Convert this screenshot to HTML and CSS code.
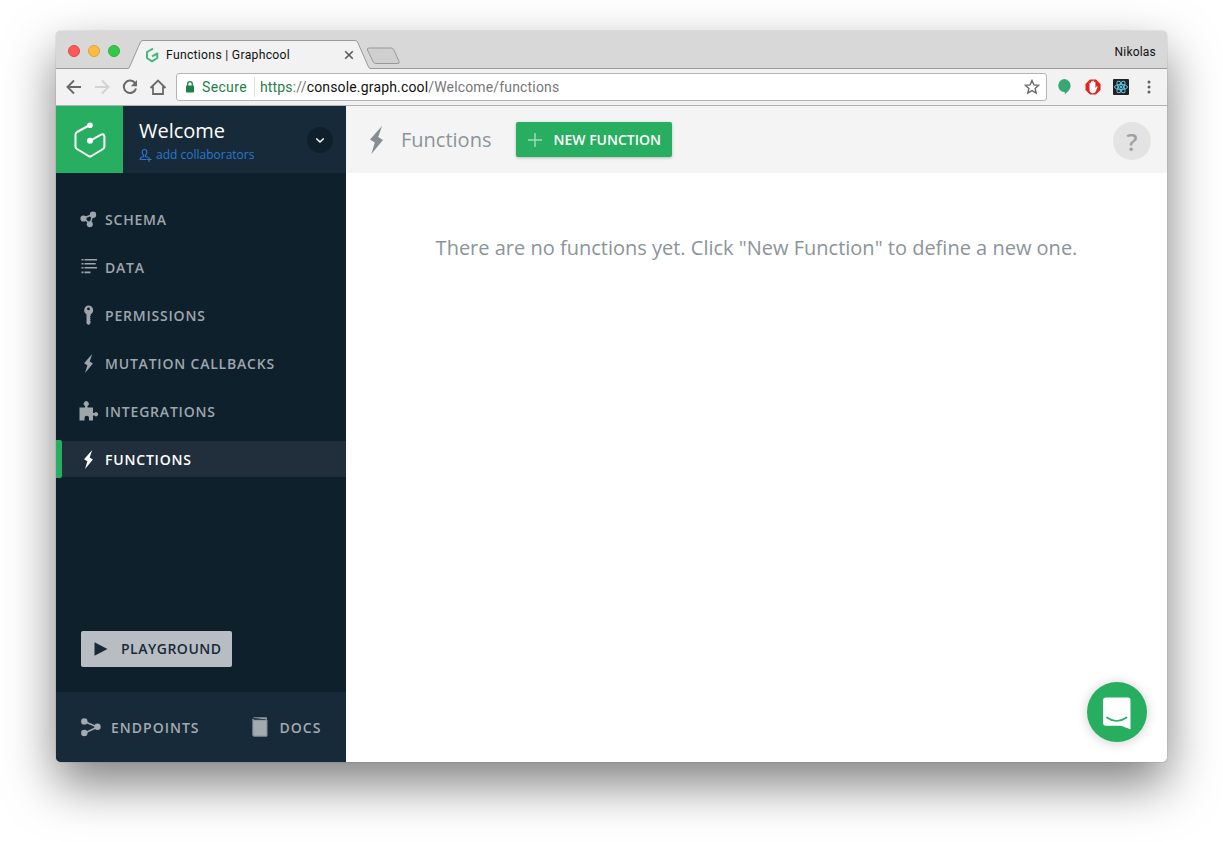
FILE: index.html
```html
<!DOCTYPE html>
<html lang="en">
<head>
<meta charset="utf-8">
<title>Functions | Graphcool</title>
<link rel="stylesheet" href="styles.css">
</head>
<body>
<svg class="defs" width="0" height="0">
  <symbol id="bolt" viewBox="0 0 13 28"><path d="M12 0L0 13.500l4.800 3L1.400 28 13 14l-4.800-3z"/></symbol>
</svg>
<div class="window">
  <header class="titlebar">
    <div class="lights"><i class="red"></i><i class="yellow"></i><i class="green"></i></div>
    <div class="tab">
      <svg class="tab-shape" width="244" height="30" viewBox="0 0 244 30"><path d="M0 28.500L1.500 27L12 3Q13 .5 15 .5H227Q229 .5 230 3L240.500 27L242 28.500V30H0z" fill="#f2f2f2"/><path d="M0 28.500Q1 28.500 1.500 27L12 3Q13 .5 15 .5H227Q229 .5 230 3L240.500 27Q241 28.500 243 28.500" fill="none" stroke="#999"/></svg>
      <svg class="favicon" width="14" height="16" viewBox="0 0 14 16" fill="none" stroke="#45b97c" stroke-width="2" stroke-linejoin="round"><path d="M8 1.600L2 5v6l5 3.300 5.300-3.300V6.500L7 9.300"/></svg>
      <span class="tab-title">Functions | Graphcool</span>
      <svg class="close" width="10" height="10" viewBox="0 0 10 10" stroke="#5a5a5a" stroke-width="1.600"><path d="M1.200 1.200l7.600 7.600M8.800 1.200L1.200 8.800"/></svg>
    </div>
    <svg class="newtab" width="35" height="18" viewBox="0 0 35 18"><path d="M3 1H25Q27 1 28 3L33 14.500Q34 16.500 31.500 16.500H10Q8 16.500 7 14.500L1.500 3Q.8 1 3 1z" fill="#cfcfcf" stroke="#999"/></svg>
    <span class="user">Nikolas</span>
  </header>
  <div class="toolbar">
    <svg class="back" width="16" height="16" viewBox="0 0 16 16" fill="none" stroke="#6a6a6a" stroke-width="1.900"><path d="M15 8H2M8 1.500L1.500 8 8 14.500"/></svg>
    <svg class="forward" width="16" height="16" viewBox="0 0 16 16" fill="none" stroke="#d2d2d2" stroke-width="1.900"><path d="M1 8h13M8 1.500L14.500 8 8 14.500"/></svg>
    <svg class="reload" width="16" height="16" viewBox="0 0 16 16"><path d="M13.300 4.500A6.200 6.200 0 1 0 14 9.500" fill="none" stroke="#6a6a6a" stroke-width="2"/><path d="M15 1v6.200H8.800z" fill="#6a6a6a"/></svg>
    <svg class="home" width="18" height="16" viewBox="0 0 18 16" fill="none" stroke="#6a6a6a" stroke-width="1.800"><path d="M1.500 9L9 1.500 16.500 9M4 7.500V15h10V7.500"/></svg>
    <div class="address">
      <svg width="10" height="12" viewBox="0 0 10 12"><rect x="1" y="4.500" width="8" height="7" rx=".8" fill="#1f8046"/><path d="M2.700 5V3a2.300 2.300 0 0 1 4.600 0v2" fill="none" stroke="#1f8046" stroke-width="1.300"/></svg>
      <span class="secure">Secure</span>
      <span class="url"><span class="scheme">https</span><span class="dim">://</span>console.graph.cool<span class="dim">/Welcome/functions</span></span>
      <svg class="star" width="16" height="16" viewBox="0 0 16 16" fill="none" stroke="#6a6a6a" stroke-width="1.400"><path d="M8 1.500l1.900 4.400 4.800.4-3.600 3.100 1.100 4.700L8 11.600l-4.200 2.500 1.100-4.700L1.300 6.300l4.800-.4z"/></svg>
    </div>
    <svg class="ext1" width="14" height="16" viewBox="0 0 14 16"><path d="M7 0a6.600 6.600 0 0 1 6.600 6.600c0 4-3 6.500-5.800 9v-2.500H7A6.600 6.600 0 0 1 7 0z" fill="#35a873"/></svg>
    <svg class="ext2" width="16" height="16" viewBox="0 0 16 16"><path d="M5 .5h6L15.500 5v6L11 15.500H5L.5 11V5z" fill="#e4231f"/><path d="M4.500 8V4.200q.8-1 1.400 0V2.700q.9-1 1.500 0V2q.8-.9 1.500 0v1q.9-.8 1.500.2V9l1-1.500q1-.6 1.300.3L10.500 13q-1 1.500-3.500 1.200Q4.500 13.500 4.500 11z" fill="#fff"/></svg>
    <svg class="ext3" width="16" height="16" viewBox="0 0 16 16" fill="none" stroke="#61c9e8"><rect width="16" height="16" rx="1" fill="#222" stroke="none"/><ellipse cx="8" cy="8" rx="6.500" ry="2.500"/><ellipse cx="8" cy="8" rx="6.500" ry="2.500" transform="rotate(60 8 8)"/><ellipse cx="8" cy="8" rx="6.500" ry="2.500" transform="rotate(120 8 8)"/><circle cx="8" cy="8" r="1" fill="#61c9e8"/></svg>
    <svg class="more" width="4" height="14" viewBox="0 0 4 14" fill="#606060"><circle cx="2" cy="2" r="1.500"/><circle cx="2" cy="7" r="1.500"/><circle cx="2" cy="12" r="1.500"/></svg>
  </div>
  <div class="page">
    <aside class="sidebar">
      <div class="project">
        <div class="logo"><svg width="32" height="36" viewBox="0 0 32 36" fill="none" stroke="#fff" stroke-width="2" stroke-linejoin="round"><path d="M16 3L3 10q-1.500 1-1.500 2.500v12.200Q1.500 26 3 27l11.500 7q1.500.8 3 0L29 27q1.400-1 1.400-2.500V14.300Q30 11.500 27 12.700L16 18.800"/><circle cx="16" cy="3.300" r="2.800" fill="#fff" stroke="none"/><circle cx="16" cy="18.800" r="3" fill="#fff" stroke="none"/></svg></div>
        <div class="project-text">
          <div class="project-name">Welcome</div>
          <div class="collab"><svg width="13" height="14" viewBox="0 0 13 14" fill="none" stroke="#2c78cf" stroke-width="1.100"><path d="M7 11.500H1.200q-.3-2.500 3.500-3V7.200Q3.200 6 3.200 3.800 3.400 1.500 5.500 1.500T7.900 3.800Q7.900 6 6.500 7.200v1.300l2.300.8M10 9v5M7.500 11.500h5"/></svg>add collaborators</div>
        </div>
        <div class="chevron"><svg width="10" height="7" viewBox="0 0 10 7" fill="none" stroke="#fff" stroke-width="1.500"><path d="M1.300 1.500L5 5l3.700-3.500"/></svg></div>
      </div>
      <nav class="menu">
        <a class="item"><span class="slot"><svg width="18" height="18" viewBox="0 0 18 18" fill="#9fa6ab"><path d="M3.500 8L13 4.500 10 14z" fill="none" stroke="#9fa6ab" stroke-width="1.500"/><circle cx="3.500" cy="8.500" r="3.100"/><circle cx="13" cy="4.800" r="3.200"/><circle cx="9.800" cy="14.300" r="3"/></svg></span>SCHEMA</a>
        <a class="item"><span class="slot"><svg width="16" height="16" viewBox="0 0 16 16" fill="#9fa6ab"><path d="M.5 0h2v1.600h-2zM3.500 0H16v1.600H3.500zM.5 4h2v1.600h-2zM3.500 4h11.200v1.600H3.500zM.5 8h2v1.600h-2zM3.500 8H16v1.600H3.500zM.5 12.600h2v1.600h-2zM3.500 12.600h6v1.600h-6z"/></svg></span>DATA</a>
        <a class="item"><span class="slot"><svg width="11" height="20" viewBox="0 0 11 20" fill="#9fa6ab"><path fill-rule="evenodd" d="M5.500.5a4.700 4.700 0 0 1 2.200 8.800v1.200l-.8 1 .8 1-.8 1 .8 1-.8 1 .8 1-.3 2-2 1.500-1.900-1.500V9.200A4.700 4.700 0 0 1 5.500.5zM5.500 2.500a1.400 1.400 0 1 0 0 2.800 1.400 1.400 0 0 0 0-2.800z"/></svg></span>PERMISSIONS</a>
        <a class="item"><span class="slot"><svg width="9" height="19"><use href="#bolt"/></svg></span>MUTATION CALLBACKS</a>
        <a class="item"><span class="slot"><svg width="20" height="20" viewBox="0 0 20 20" fill="#9fa6ab"><path d="M.5 6.500H6V5a2.500 2.500 0 1 1 2.500 0v1.500H14V12h1.500a2 2 0 1 1 0 2.500H14v5h-4V17a1.800 1.800 0 1 0-4.500 0v2.500h-5z"/></svg></span>INTEGRATIONS</a>
        <a class="item active"><span class="slot"><svg width="9" height="19"><use href="#bolt"/></svg></span>FUNCTIONS</a>
      </nav>
      <a class="playground"><svg width="14" height="14" viewBox="0 0 14 14" fill="#182a38"><path d="M.5.3L13.500 7 .5 13.700z"/></svg><span>PLAYGROUND</span></a>
      <footer class="foot">
        <svg width="20" height="19" viewBox="0 0 20 19" fill="#a3aab0"><path d="M3.300 3.500L16.500 9 3.300 15.300" fill="none" stroke="#a3aab0" stroke-width="1.500"/><circle cx="3.300" cy="3.400" r="3.200"/><circle cx="16.500" cy="8.700" r="3.200"/><circle cx="3.300" cy="15" r="3.200"/></svg>
        <span>ENDPOINTS</span>
        <svg class="book" width="16" height="20" viewBox="0 0 16 20"><path d="M1.500.7h13v2M.8 2V18q0 1.200 1.200 1.200H15V3H2Q.8 3 .8 1.800" fill="#a3aab0" stroke="#7f8a93"/><path d="M2.500 2.400H13.500" stroke="#33434f" stroke-width="1"/></svg>
        <span>DOCS</span>
      </footer>
    </aside>
    <main class="main">
      <div class="topbar">
        <svg class="title-bolt" width="13" height="28"><use href="#bolt"/></svg>
        <h1>Functions</h1>
        <button class="new"><svg width="14" height="14" viewBox="0 0 14 14" stroke="#a0dab9" stroke-width="1.500"><path d="M7 0v14M0 7h14"/></svg>NEW FUNCTION</button>
        <span class="help">?</span>
      </div>
      <p class="empty">There are no functions yet. Click "New Function" to define a new one.</p>
      <div class="chat"><svg width="30" height="33" viewBox="0 0 30 33"><path d="M4 .5h22Q28.500.5 28.500 3.500V32.300Q23.500 30.500 19 28.800H4Q1 28.800 1 25.800V3.500Q1 .5 4 .5z" fill="#fff"/><path d="M5 20.500Q14.500 27.500 24.500 20.500" fill="none" stroke="#27ae60" stroke-width="1.700" stroke-linecap="round"/></svg></div>
    </main>
  </div>
</div>
</body>
</html>
```

FILE: styles.css
```css
* { box-sizing: border-box; }
body { margin: 0; width: 1223px; height: 842px; padding: 31px 56px 80px; overflow: hidden; background: #fff; font-family: "Open Sans", sans-serif; }
svg { display: block; flex: none; }
.defs { position: absolute; }
.window { width: 1111px; height: 731px; border-radius: 5px; display: flex; flex-direction: column; box-shadow: 0 0 1px rgba(0,0,0,.55), 0 22px 50px rgba(0,0,0,.5); }
.titlebar { height: 38px; flex: none; display: flex; background: #d8d8d8; border-bottom: 1px solid #999; border-radius: 5px 5px 0 0; font-family: Roboto, sans-serif; }
.lights { display: flex; gap: 8px; padding: 14px 0 0 12px; width: 72px; flex: none; }
.lights i { width: 12px; height: 12px; border-radius: 50%; flex: none; }
.red { background: #fc5b57; border: 1px solid #e2463f; }
.yellow { background: #fdbc40; border: 1px solid #e0a135; }
.green { background: #34c84a; border: 1px solid #2dae3c; }
.tab { width: 244px; height: 30px; margin-top: 9px; position: relative; flex: none; display: flex; align-items: center; padding-left: 17px; }
.tab-shape { position: absolute; left: 0; top: 0; }
.favicon, .tab-title, .close { position: relative; }
.tab-title { font-size: 12.2px; color: #111; margin-left: 7px; width: 178px; line-height: 16px; letter-spacing: .29px; margin-top: -1px; }
.newtab { margin: 16px 0 0 -6px; }
.user { margin: 13px 11px 0 auto; font-size: 12px; line-height: 16px; letter-spacing: .2px; color: #111; }
.toolbar { height: 37px; flex: none; display: flex; align-items: center; background: #f2f2f2; border-bottom: 1px solid #b2b0b2; padding-left: 10px; font-family: Roboto, sans-serif; }
.forward { margin-left: 12px; }
.reload { margin-left: 12px; }
.home { margin-left: 11px; }
.address { width: 871px; height: 28px; margin-left: 9px; border: 1px solid #b4b4b4; border-radius: 3px; background: #fff; display: flex; align-items: center; padding: 0 6px 0 8px; font-size: 14px; color: #111; }
.secure { color: #1f8046; margin-left: 7px; padding-right: 7px; border-right: 1px solid #ddd; line-height: 20px; letter-spacing: .35px; width: 53px; }
.url { margin-left: 5px; letter-spacing: .16px; }
.scheme { color: #1f8046; }
.dim { color: #777; }
.star { margin-left: auto; }
.ext1 { margin-left: 10px; }
.ext2 { margin-left: 14px; }
.ext3 { margin-left: 12px; }
.more { margin-left: 18px; }
.page { flex: 1; display: flex; min-height: 0; }
.sidebar { width: 290px; background: #0f202d; border-radius: 0 0 0 5px; display: flex; flex-direction: column; }
.project { height: 67px; flex: none; display: flex; background: #172a39; }
.logo { width: 67px; display: flex; align-items: center; justify-content: center; background: #27ae60; }
.project-text { padding: 11px 0 0 16px; width: 184px; white-space: nowrap; }
.project-name { color: #fff; font-size: 20px; line-height: 28px; }
.collab { display: flex; align-items: center; color: #2c78cf; font-size: 12px; line-height: 18px; gap: 4px; margin-top: 1px; }
.chevron { width: 26px; height: 26px; margin-top: 21px; border-radius: 50%; background: #0f202d; display: flex; align-items: center; justify-content: center; }
.menu { padding-top: 28px; display: flex; flex-direction: column; gap: 12px; }
.item { display: flex; align-items: center; height: 36px; color: #9fa6ab; fill: #9fa6ab; font-size: 14px; font-weight: 600; letter-spacing: .8px; padding-left: 16px; }
.slot { width: 33px; display: flex; justify-content: center; }
.active { color: #fff; fill: #fff; background: #212f3c; position: relative; }
.active::before { content: ""; position: absolute; left: 0; top: -1px; width: 6px; height: 38px; background: #27ae60; border-radius: 0 2px 2px 0; }
.playground { width: 151px; height: 36px; margin: auto 0 25px 25px; border-radius: 2px; background: #b8bdc4; color: #182a38; display: flex; align-items: center; padding-left: 13px; gap: 13px; font-size: 14px; font-weight: 600; letter-spacing: .5px; }
.playground span { padding-bottom: 2px; }
.foot { height: 70px; flex: none; background: #172a39; border-radius: 0 0 0 5px; display: flex; align-items: center; padding-left: 25px; color: #a3aab0; font-size: 14px; font-weight: 600; letter-spacing: 1px; }
.foot span { margin-left: 10px; line-height: 20px; margin-top: 2px; }
.foot .book { margin-left: 52px; }
.foot .book + span { margin-left: 12px; }
.main { flex: 1; background: #fff; border-radius: 0 0 5px 0; position: relative; }
.topbar { height: 67px; background: #f4f4f4; display: flex; align-items: center; padding: 0 16px 0 24px; }
.title-bolt { fill: #858e95; }
h1 { font-size: 20px; font-weight: 400; color: #8b949a; margin: 0 0 0 18px; width: 115px; line-height: 28px; }
.new { width: 156px; height: 35px; border: 0; border-radius: 2px; padding: 0 0 0 12px; background: #27ae60; color: #fff; box-shadow: 0 1px 3px rgba(0,0,0,.25); display: flex; align-items: center; gap: 11.5px; font: 600 14px "Open Sans", sans-serif; white-space: nowrap; }
.help { margin: 2px 0 0 auto; width: 38px; height: 38px; border-radius: 50%; background: #e3e3e3; color: #a0a0a0; font-size: 24px; font-weight: 600; line-height: 39px; text-align: center; }
.empty { margin: 61px 0 0; text-align: center; font-size: 20px; line-height: 28px; color: #8b949a; white-space: nowrap; }
.chat { position: absolute; right: 20px; bottom: 20px; width: 60px; height: 60px; border-radius: 50%; background: #27ae60; box-shadow: 0 1px 12px rgba(0,0,0,.2); display: flex; align-items: center; justify-content: center; padding-top: 2px; }
```
